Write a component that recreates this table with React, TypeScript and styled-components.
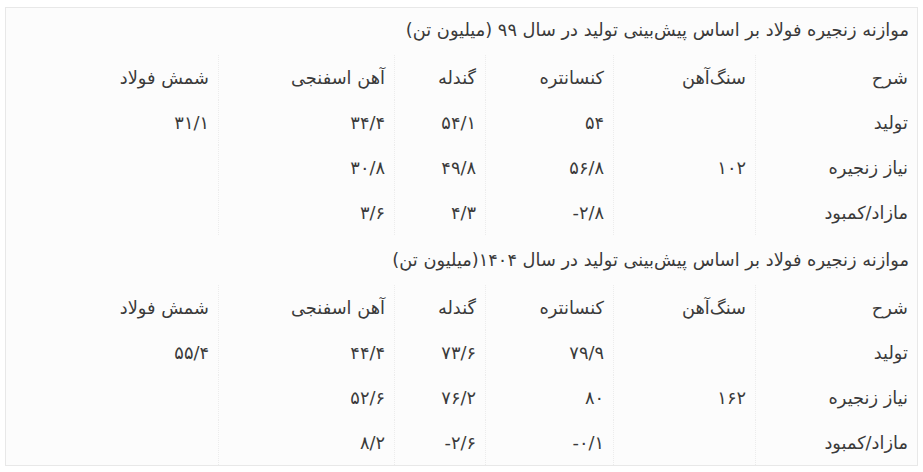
import React from 'react';
import styled, { createGlobalStyle } from 'styled-components';

const Global = createGlobalStyle`
  body {
    margin: 0;
    background: #ffffff;
    font-family: "DejaVu Sans", "Noto Sans", sans-serif;
  }
`;

const Page = styled.div`
  padding: 7px 5px 0 5px;
  width: 913px;
`;

const Box = styled.div`
  direction: rtl;
  border: 1px solid #e8e8e8;
  background: #fcfcfc;
  color: #3a3a3a;
  font-size: 17.8px;
  display: flex;
  flex-direction: column;
  gap: 3px;
`;

const Title = styled.div`
  height: 47px;
  line-height: 44px;
  padding-right: 8px;
  white-space: nowrap;
`;

const Grid = styled.div`
  display: grid;
  grid-template-columns: 162px 142px 128px 91px 176px 1fr;
`;

const Cell = styled.div<{ $last?: boolean }>`
  height: 45px;
  line-height: 45px;
  padding-right: 9px;
  white-space: nowrap;
  border-left: ${p => (p.$last ? 'none' : '1px dotted #ececec')};
`;

type Block = {
  title: string;
  rows: string[][];
};

const head = ['شرح', 'سنگ‌آهن', 'کنسانتره', 'گندله', 'آهن اسفنجی', 'شمش فولاد'];

const blocks: Block[] = [
  {
    title: 'موازنه زنجیره فولاد بر اساس پیش‌بینی تولید در سال ۹۹ (میلیون تن)',
    rows: [
      head,
      ['تولید', '', '۵۴', '۵۴/۱', '۳۴/۴', '۳۱/۱'],
      ['نیاز زنجیره', '۱۰۲', '۵۶/۸', '۴۹/۸', '۳۰/۸', ''],
      ['مازاد/کمبود', '', '۲/۸-', '۴/۳', '۳/۶', ''],
    ],
  },
  {
    title: 'موازنه زنجیره فولاد بر اساس پیش‌بینی تولید در سال ۱۴۰۴(میلیون تن)',
    rows: [
      head,
      ['تولید', '', '۷۹/۹', '۷۳/۶', '۴۴/۴', '۵۵/۴'],
      ['نیاز زنجیره', '۱۶۲', '۸۰', '۷۶/۲', '۵۲/۶', ''],
      ['مازاد/کمبود', '', '۰/۱-', '۲/۶-', '۸/۲', ''],
    ],
  },
];

const App: React.FC = () => {
  return (
    <>
      <Global />
      <Page>
        <Box>
          {blocks.map((block, bi) => (
            <div key={bi}>
              <Title>{block.title}</Title>
              <Grid>
                {block.rows.map((row, ri) =>
                  row.map((cell, ci) => (
                    <Cell key={`${ri}-${ci}`} $last={ci === row.length - 1}>
                      {cell}
                    </Cell>
                  ))
                )}
              </Grid>
            </div>
          ))}
        </Box>
      </Page>
    </>
  );
};

export default App;
